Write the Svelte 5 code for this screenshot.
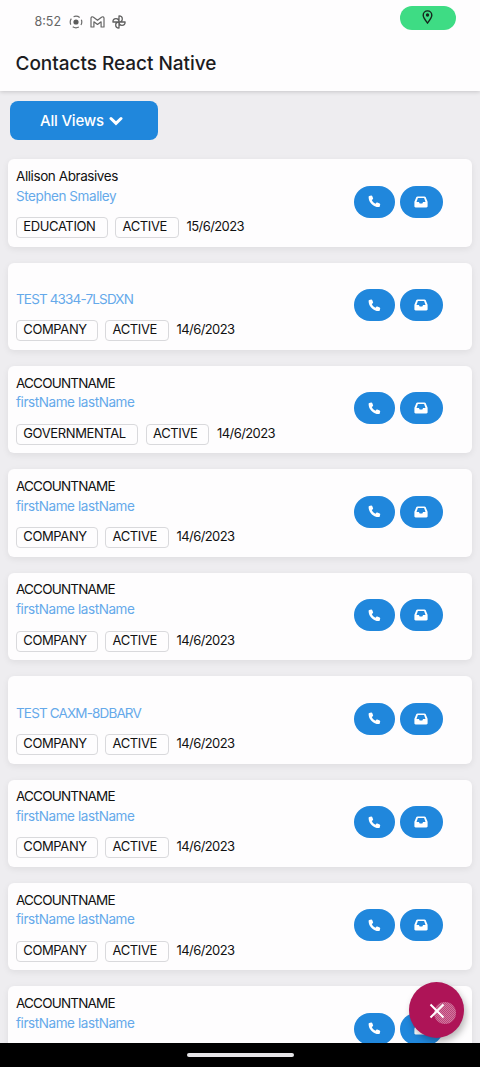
<script>
  const contacts = [
    { account: 'Allison Abrasives', name: 'Stephen Smalley', type: 'EDUCATION', date: '15/6/2023' },
    { account: '', name: 'TEST 4334-7LSDXN', type: 'COMPANY', date: '14/6/2023' },
    { account: 'ACCOUNTNAME', name: 'firstName lastName', type: 'GOVERNMENTAL', date: '14/6/2023' },
    { account: 'ACCOUNTNAME', name: 'firstName lastName', type: 'COMPANY', date: '14/6/2023' },
    { account: 'ACCOUNTNAME', name: 'firstName lastName', type: 'COMPANY', date: '14/6/2023' },
    { account: '', name: 'TEST CAXM-8DBARV', type: 'COMPANY', date: '14/6/2023' },
    { account: 'ACCOUNTNAME', name: 'firstName lastName', type: 'COMPANY', date: '14/6/2023' },
    { account: 'ACCOUNTNAME', name: 'firstName lastName', type: 'COMPANY', date: '14/6/2023' },
    { account: 'ACCOUNTNAME', name: 'firstName lastName' }
  ];
  const tagWidths = { EDUCATION: 91.5, COMPANY: 81.5, GOVERNMENTAL: 122 };
  const isCaps = (text) => text === text.toUpperCase();
</script>

<div class="screen">
  <header>
    <div class="status">
      <span class="time">8:52</span>
      <svg class="rec" width="14" height="14" viewBox="0 0 14 14" fill="none" stroke="#6b6b6b" stroke-width="1.2">
        <circle cx="7" cy="7" r="5.8" stroke-dasharray="6.4 2.71" stroke-dashoffset="3.2" />
        <circle cx="7" cy="7" r="2.6" fill="#5c5c5c" stroke="none" />
      </svg>
      <svg class="mail" width="15" height="12" viewBox="0 0 15 12" fill="none" stroke="#666" stroke-width="1.2" stroke-linejoin="round">
        <path d="M1 2.200C1 .7 2.500.4 3.500 1.200l4 3.100 4-3.100c1-.8 2.500-.5 2.500 1V11h-2.900V5.800L7.500 8.500 3.900 5.800V11H1z" />
      </svg>
      <svg class="fan" width="14" height="14" viewBox="0 0 14 14" fill="none" stroke="#5f5f5f" stroke-width="1.3" stroke-linejoin="round">
        <path d="M7 7V.9C9.100.9 10.300 2.200 10.300 4S8.800 7 7 7zM7 7h6.100c0 2.100-1.300 3.300-3.100 3.300S7 8.800 7 7zM7 7v6.100c-2.100 0-3.300-1.300-3.300-3.100S5.200 7 7 7zM7 7H.9C.9 4.900 2.200 3.700 4 3.700S7 5.200 7 7z" />
      </svg>
      <span class="location">
        <svg width="11" height="14" viewBox="0 0 11 14" fill="none" stroke="#16271d" stroke-width="1.4">
          <path d="M5.500 13C3 9.700 1.200 7.600 1.200 5.200a4.300 4.300 0 0 1 8.600 0C9.800 7.600 8 9.700 5.500 13z" />
          <circle cx="5.500" cy="5" r="1.700" fill="#16271d" stroke="none" />
        </svg>
      </span>
    </div>
    <h1>Contacts React Native</h1>
  </header>

  <main>
    <button class="views">
      <span>All Views</span>
      <svg width="14" height="10" viewBox="0 0 14 10" fill="none" stroke="#fff" stroke-width="3"><path d="M2 2.500 7 7.300l5-4.800" stroke-linecap="round" /></svg>
    </button>

    <div class="list">
      {#each contacts as contact}
        <article>
          <div class="info">
            <div class="account" class:caps={isCaps(contact.account)}>{contact.account}</div>
            <div class="name" class:caps={isCaps(contact.name)}>{contact.name}</div>
            {#if contact.type}
              <div class="meta">
                <span class="tag" style="width: {tagWidths[contact.type]}px">{contact.type}</span>
                <span class="tag active">ACTIVE</span>
                <span class="date">{contact.date}</span>
              </div>
            {/if}
          </div>
          <div class="actions">
            <button class="call" aria-label="Call">
              <svg width="13" height="13" viewBox="0 0 13 13" fill="#fff">
                <path d="M1.300 1.100 3.100.6c.5-.1.900.1 1.100.5l.9 2.200c.1.400 0 .7-.3 1l-1 .8c.7 1.600 2 2.900 3.700 3.700l.8-1c.3-.3.7-.4 1.100-.3l2.300.9c.4.200.6.600.5 1.100l-.5 1.900c-.1.400-.4.700-.9.700C5.200 12.100.6 7.500.6 2c0-.5.300-.8.700-.9z" />
              </svg>
            </button>
            <button class="inbox" aria-label="Inbox">
              <svg width="14" height="12" viewBox="0 0 14 12" fill="#fff" fill-rule="evenodd"><path d="M3.600.5h6.800c.5 0 .9.200 1.200.6l1.800 4.200c.2.300.2.600.2.900v4.100c0 .7-.5 1.200-1.200 1.200H1.600c-.7 0-1.200-.5-1.200-1.200V6.200c0-.3 0-.6.200-.9l1.800-4.200C2.700.7 3.100.5 3.600.5zM3.900 2 2.500 5.900h2.400l.8 1.600h2.600l.8-1.600h2.400L10.100 2z" /></svg>
            </button>
          </div>
        </article>
      {/each}
    </div>
  </main>

  <footer><span class="handle"></span></footer>

  <button class="fab" aria-label="Close">
    <span class="touch"></span>
    <svg width="16" height="16" viewBox="0 0 16 16" fill="none" stroke="#fff" stroke-width="2"><path d="M1.500 1.500l13 13M14.500 1.500l-13 13" /></svg>
  </button>
</div>

<style>
  :global(body) { margin: 0; }
  .screen {
    position: relative;
    display: flex;
    flex-direction: column;
    width: 480px;
    height: 1067px;
    overflow: hidden;
    background: #eeedf0;
    color: #111;
    font-family: Inter, Roboto, sans-serif;
  }
  button { border: 0; padding: 0; font: inherit; display: flex; align-items: center; justify-content: center; }
  svg { display: block; flex: none; }
  header {
    flex: none;
    height: 91px;
    background: #fefdfe;
    box-shadow: 0 1px 4px rgba(0, 0, 0, 0.17);
    z-index: 1;
  }
  .status { display: flex; align-items: center; height: 44px; padding: 0 24px 0 34.500px; color: #666; }
  .time { width: 34px; font-size: 12.500px; line-height: 16px; }
  .mail { margin-left: 7px; }
  .fan { margin-left: 7px; }
  .location {
    display: flex;
    align-items: center;
    justify-content: center;
    width: 56px;
    height: 24px;
    margin: 0 0 9px auto;
    border-radius: 12px;
    background: #3edc84;
  }
  .location svg { margin: 0 1px 2px 0; }
  h1 { margin: 7px 0 0 15.500px; font-size: 19px; line-height: 25px; font-weight: 500; letter-spacing: -0.03px; color: #1c1c1f; white-space: nowrap; }
  main { flex: 1; min-height: 0; overflow: hidden; padding: 9.500px 8px 0; }
  .views {
    box-sizing: border-box;
    gap: 5px;
    width: 148px;
    height: 39.500px;
    margin-left: 2px;
    padding-right: 5px;
    border-radius: 8px;
    background: #2087dc;
    color: #fff;
    font-size: 15px;
    font-weight: 500;
    letter-spacing: -0.2px;
  }
  .views svg { margin-top: 2px; }
  .list { display: flex; flex-direction: column; gap: 15.900px; padding-top: 19.200px; }
  article {
    display: flex;
    flex: none;
    height: 87.500px;
    border-radius: 6px;
    background: #fefdfe;
    box-shadow: 0 2px 7px rgba(0, 0, 0, 0.07);
  }
  .info { flex: 1; padding: 7.700px 0 0 8px; font-size: 13.500px; white-space: nowrap; }
  .account, .name { height: 19.700px; line-height: 19px; letter-spacing: -0.42px; }
  .name { color: #65a9ea; }
  .account.caps { letter-spacing: -0.8px; }
  .name.caps { letter-spacing: -0.85px; }
  .meta { display: flex; gap: 7.800px; padding-top: 10.800px; font-size: 13px; }
  .tag {
    box-sizing: border-box;
    height: 21px;
    padding-left: 6.300px;
    border: 1px solid #d9d9dc;
    border-radius: 4px;
    line-height: 17.500px;
    letter-spacing: -0.38px;
  }
  .active { width: 63.500px; }
  .date { line-height: 19.500px; letter-spacing: -0.6px; }
  .actions { display: flex; align-items: flex-start; gap: 4.500px; padding: 26.500px 29.500px 0 0; }
  .actions button { height: 32px; border-radius: 16px; background: #2087dc; }
  .call { width: 41.500px; }
  .inbox { width: 43px; }
  .inbox svg { margin-right: 1px; }
  footer { flex: none; display: flex; justify-content: center; height: 24px; background: #000; }
  .handle { width: 107px; height: 4px; margin-top: 10px; border-radius: 2px; background: #e6e5e8; }
  .fab {
    position: absolute;
    left: 409px;
    top: 982px;
    width: 55px;
    height: 56px;
    border-radius: 50%;
    background: #ae1457;
    box-shadow: 2px 4px 7px rgba(0, 0, 0, 0.28);
    z-index: 2;
  }
  .fab svg { position: relative; top: 1px; }
  .touch {
    position: absolute;
    left: 25px;
    top: 20px;
    width: 22px;
    height: 22px;
    border-radius: 50%;
    background: repeating-conic-gradient(rgba(255, 255, 255, 0.42) 0 25%, rgba(255, 255, 255, 0.2) 0 50%) 0 0 / 2px 2px;
  }
</style>
